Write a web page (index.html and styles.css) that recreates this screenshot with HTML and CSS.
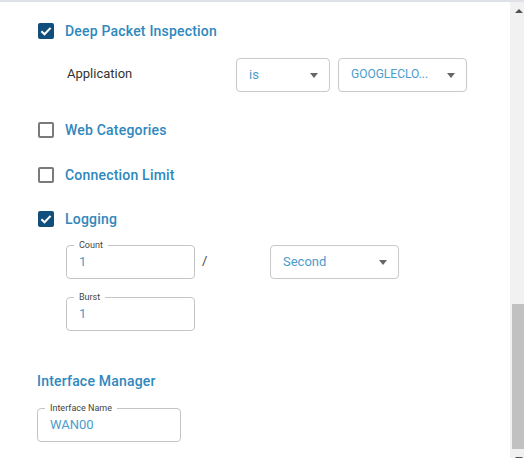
FILE: index.html
```html
<!DOCTYPE html>
<html lang="en">
<head>
<meta charset="utf-8">
<title>Policy options</title>
<link rel="stylesheet" href="styles.css">
</head>
<body>
<div class="frame">
  <main class="content">
    <div class="check-row row-dpi">
      <span class="cb cb-on"><svg viewBox="0 0 16 16" width="16" height="16"><path d="M3.4 8.3 L6.5 11.3 L12.6 4.9" fill="none" stroke="#fff" stroke-width="2"/></svg></span>
      <span class="cb-label">Deep Packet Inspection</span>
    </div>
    <div class="app-row">
      <span class="app-label">Application</span>
      <div class="select sel-is"><span class="sel-text">is</span><i class="caret"></i></div>
      <div class="select sel-app"><span class="sel-text">GOOGLECLO...</span><i class="caret"></i></div>
    </div>
    <div class="check-row row-web">
      <span class="cb cb-off"></span>
      <span class="cb-label">Web Categories</span>
    </div>
    <div class="check-row row-conn">
      <span class="cb cb-off"></span>
      <span class="cb-label">Connection Limit</span>
    </div>
    <div class="check-row row-log">
      <span class="cb cb-on"><svg viewBox="0 0 16 16" width="16" height="16"><path d="M3.4 8.3 L6.5 11.3 L12.6 4.9" fill="none" stroke="#fff" stroke-width="2"/></svg></span>
      <span class="cb-label">Logging</span>
    </div>
    <div class="log-row">
      <div class="field f-count"><span class="f-label">Count</span><span class="f-value">1</span></div>
      <span class="slash">/</span>
      <div class="select sel-second"><span class="sel-text">Second</span><i class="caret"></i></div>
    </div>
    <div class="field f-burst"><span class="f-label">Burst</span><span class="f-value">1</span></div>
    <h3 class="section">Interface Manager</h3>
    <div class="field f-iface"><span class="f-label">Interface Name</span><span class="f-value">WAN00</span></div>
  </main>
  <div class="scrollbar">
    <div class="sb-btn sb-up"><i class="arrow-up"></i></div>
    <div class="sb-space"></div>
    <div class="sb-thumb"></div>
    <div class="sb-btn sb-down"><i class="arrow-down"></i></div>
  </div>
</div>
</body>
</html>
```
FILE: styles.css
```css
html, body {
  margin: 0;
  padding: 0;
  background: #fff;
}
body {
  font-family: Roboto, "Noto Sans", sans-serif;
  color: #333;
  width: 524px;
  height: 458px;
  overflow: hidden;
}
.frame {
  border-top: 2px solid #dee2e6;
  height: 456px;
  display: flex;
}
.content {
  flex: 1;
  padding-left: 38px;
}
.check-row {
  display: flex;
  align-items: center;
  gap: 11px;
  height: 16px;
}
.row-dpi { margin-top: 21px; }
.row-web { margin-top: 30px; }
.row-conn { margin-top: 29px; }
.row-log { margin-top: 28px; }
.cb {
  width: 16px;
  height: 16px;
  box-sizing: border-box;
  border-radius: 2px;
  flex: none;
  display: block;
}
.cb svg { display: block; }
.cb-on { background: #104f7c; }
.cb-off { border: 2px solid #7a7a7a; }
.cb-label {
  font-size: 14px;
  font-weight: 500;
  color: #2e88bd;
  line-height: 16px;
  letter-spacing: 0.2px;
  margin-top: -1px;
}
.app-row {
  display: flex;
  align-items: center;
  margin-top: 19px;
  margin-left: 29px;
  height: 34px;
}
.app-label {
  width: 169px;
  font-size: 13px;
  color: #333;
  margin-top: -4px;
}
.select {
  box-sizing: border-box;
  height: 34px;
  border: 1px solid #c9c9c9;
  border-radius: 4px;
  display: flex;
  align-items: center;
  justify-content: space-between;
  padding: 0 11px 0 12px;
}
.sel-is { width: 94px; }
.sel-app { width: 129px; margin-left: 8px; }
.sel-second { width: 129px; }
.sel-text {
  font-size: 13px;
  color: #4a9ccc;
  margin-top: -2px;
}
.sel-app .sel-text { font-size: 12px; }
.caret {
  width: 0;
  height: 0;
  border-left: 4.5px solid transparent;
  border-right: 4.5px solid transparent;
  border-top: 5px solid #666;
}
.log-row {
  display: flex;
  align-items: center;
  margin-top: 18px;
  margin-left: 28px;
}
.slash {
  width: 75px;
  box-sizing: border-box;
  padding-left: 7px;
  font-size: 13px;
  color: #444;
  margin-top: -4px;
}
.field {
  position: relative;
  box-sizing: border-box;
  height: 34px;
  border: 1px solid #c4c4c4;
  border-radius: 4px;
  display: flex;
  align-items: center;
  padding-left: 12px;
}
.f-count, .f-burst { width: 129px; }
.f-burst { margin-top: 18px; margin-left: 28px; }
.f-iface { width: 144px; margin-left: -1px; }
.f-label {
  position: absolute;
  left: 7px;
  top: -7px;
  padding: 0 5px;
  background: #fff;
  font-size: 9px;
  line-height: 12px;
  color: #444;
}
.f-value {
  font-size: 13px;
  color: #4a9ccc;
  margin-top: -1px;
}
.section {
  margin: 40px 0 17px -1px;
  font-size: 14px;
  font-weight: 500;
  line-height: 20px;
  color: #2e88bd;
  letter-spacing: 0.2px;
}
.scrollbar {
  width: 14px;
  flex: none;
  background: #f1f1f1;
  display: flex;
  flex-direction: column;
}
.sb-btn {
  flex: none;
  overflow: hidden;
}
.sb-up {
  height: 15px;
}
.arrow-up {
  display: block;
  width: 0;
  height: 0;
  margin: 7px 0 0 5px;
  border-left: 4px solid transparent;
  border-right: 4px solid transparent;
  border-bottom: 4px solid #505050;
}
.sb-space { height: 287px; flex: none; }
.sb-thumb {
  height: 145px;
  flex: none;
  margin-left: 2px;
  background: #c1c1c1;
}
.sb-down { flex: 1; }
.arrow-down {
  display: block;
  width: 0;
  height: 0;
  margin: 8px 0 0 5px;
  border-left: 4px solid transparent;
  border-right: 4px solid transparent;
  border-top: 4px solid #505050;
}
```
